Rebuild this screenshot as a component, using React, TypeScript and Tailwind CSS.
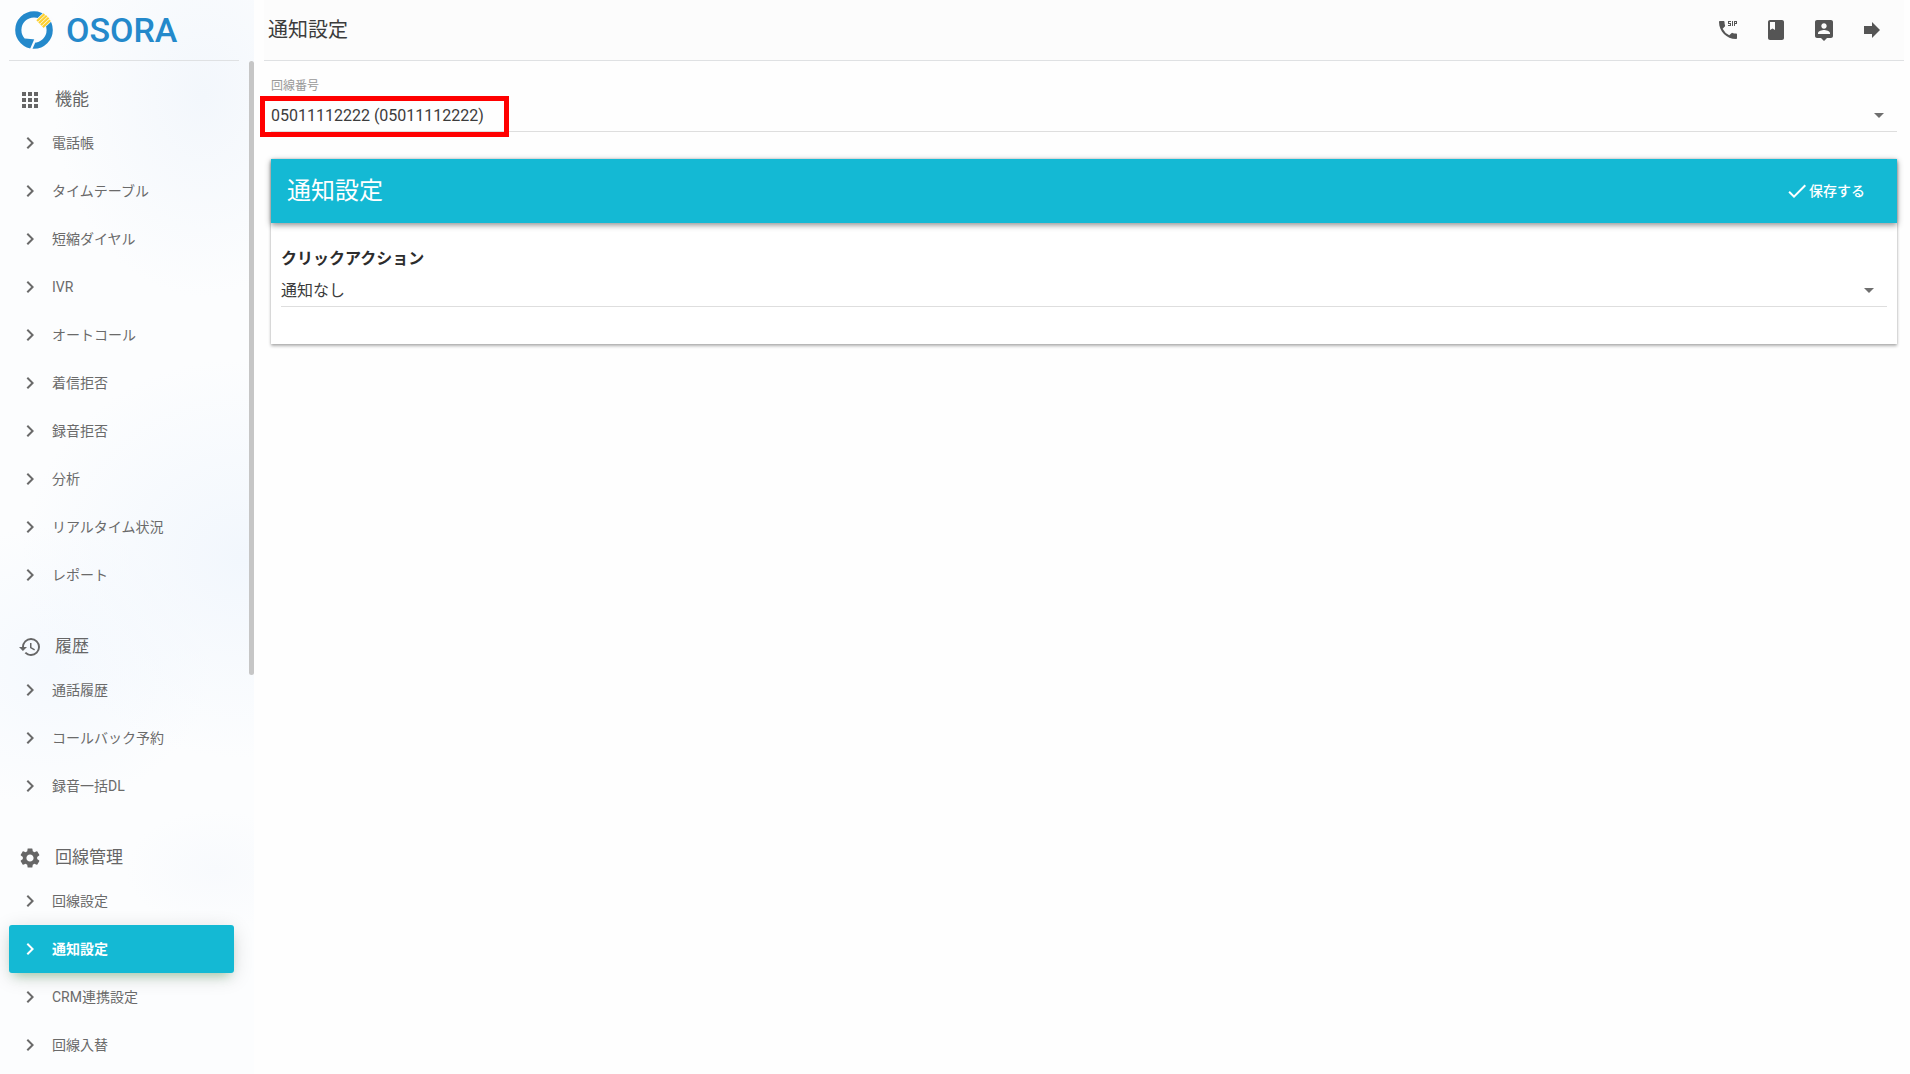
import type { ReactNode } from "react";
import {
  MdApps,
  MdArrowDropDown,
  MdBook,
  MdCheck,
  MdChevronRight,
  MdDialerSip,
  MdForward,
  MdHistory,
  MdSettings,
} from "react-icons/md";

type Section = {
  title: string;
  icon: ReactNode;
  items: string[];
};

const SECTIONS: Section[] = [
  {
    title: "機能",
    icon: <MdApps size={24} />,
    items: ["電話帳", "タイムテーブル", "短縮ダイヤル", "IVR", "オートコール", "着信拒否", "録音拒否", "分析", "リアルタイム状況", "レポート"],
  },
  {
    title: "履歴",
    icon: <MdHistory size={24} />,
    items: ["通話履歴", "コールバック予約", "録音一括DL"],
  },
  {
    title: "回線管理",
    icon: <MdSettings size={24} />,
    items: ["回線設定", "通知設定", "CRM連携設定", "回線入替"],
  },
];

const ACTIVE = "通知設定";

function AccountIcon() {
  return (
    <svg width={24} height={24} viewBox="0 0 24 24" fill="currentColor">
      <path d="M19 2H5c-1.1 0-2 .9-2 2v14c0 1.1.9 2 2 2h4l3 3 3-3h4c1.1 0 2-.9 2-2V4c0-1.1-.9-2-2-2zm-7 3.3c1.49 0 2.7 1.21 2.7 2.7 0 1.49-1.21 2.7-2.7 2.7-1.49 0-2.7-1.21-2.7-2.7 0-1.49 1.21-2.7 2.7-2.7zM18 16H6v-.9c0-2 4-3.1 6-3.1s6 1.1 6 3.1v.9z" />
    </svg>
  );
}

const ACTIONS = [
  { label: "SIP", icon: <MdDialerSip size={24} /> },
  { label: "マニュアル", icon: <MdBook size={24} /> },
  { label: "アカウント", icon: <AccountIcon /> },
  { label: "ログアウト", icon: <MdForward size={24} /> },
];

function Logo() {
  return (
    <a href="#" className="flex items-center gap-3 pl-[5px]" aria-label="OSORA">
      <svg width={40} height={40} viewBox="0 0 40 40" fill="none">
        <circle cx={20} cy={20} r={15.7} stroke="#2489cb" strokeWidth={6.2} />
        <path d="M11 28.5L21.5 29.5L18 36L12 34Z" fill="#2489cb" />
        <path d="M22 28L16.8 40" stroke="#fbfcfe" strokeWidth={2.2} />
        <g transform="translate(29.6 10.6) rotate(-43)">
          <rect x={-6} y={-6} width={14} height={12} fill="#fbfcfe" />
          <path d="M-5 -4.2H5M-5 -1.4H5.6M-5 1.4H5.6M-5 4.2H5" stroke="#fdd02f" strokeWidth={2.2} />
        </g>
      </svg>
      <span className="text-[34px] leading-10 font-medium text-[#2489cb]">OSORA</span>
    </a>
  );
}

function NavItem({ label }: { label: string }) {
  const active = label === ACTIVE;
  return (
    <li>
      <a
        href="#"
        aria-current={active ? "page" : undefined}
        className={
          active
            ? "flex h-12 items-center gap-[10px] rounded-[3px] bg-[#14b9d4] pl-[9px] text-sm font-bold text-white shadow-[0_4px_20px_0_rgba(0,0,0,0.14),0_7px_10px_-5px_rgba(76,175,80,0.4)]"
            : "flex h-12 items-center gap-[10px] pl-[9px] text-sm text-[#6a6a6a]"
        }
      >
        <MdChevronRight size={24} />
        {label}
      </a>
    </li>
  );
}

function Sidebar() {
  return (
    <aside className="relative w-[254px] shrink-0 bg-[#fcfdfe] bg-[radial-gradient(ellipse_150px_200px_at_80%_9%,#f3f7fc,transparent),radial-gradient(ellipse_220px_200px_at_95%_52%,#f2f7fd,transparent),radial-gradient(ellipse_160px_140px_at_20%_62%,#f5f9fe,transparent),radial-gradient(ellipse_90px_60px_at_85%_81%,#f8fafd,transparent)]">
      <div className="mr-[15px] ml-[9px] flex h-[61px] items-center border-b border-[#dfe1e3]">
        <Logo />
      </div>
      <nav className="mr-5 ml-[9px] flex flex-col gap-[29px] pt-5">
        {SECTIONS.map(s => (
          <section key={s.title}>
            <h2 className="flex h-[38px] items-center gap-[13px] pl-[9px] text-[17px] text-[#666666]">
              {s.icon}
              {s.title}
            </h2>
            <ul>
              {s.items.map(item => <NavItem key={item} label={item} />)}
            </ul>
          </section>
        ))}
      </nav>
      {/* scrollbar thumb */}
      <div className="absolute top-[61px] right-0 h-[614px] w-[5px] rounded-full bg-[#c6c6c6]" />
    </aside>
  );
}

function Select({ id, value }: { id: string; value: string }) {
  return (
    <div className="relative border-b border-[#dedede]">
      <select id={id} defaultValue={value} className="block h-8 w-full appearance-none bg-transparent pt-[2px] text-base text-[#3c3c3c]">
        <option>{value}</option>
      </select>
      <MdArrowDropDown size={24} className="pointer-events-none absolute top-1 right-[6px] text-[#6f6f6f]" />
    </div>
  );
}

export default function App() {
  return (
    <div className="flex h-screen overflow-hidden bg-[#fefefe] font-['Roboto','Noto_Sans_CJK_JP',sans-serif]">
      <Sidebar />
      <div className="min-w-0 flex-1">
        <header className="mr-[6px] ml-[10px] flex h-[61px] items-center justify-between border-b border-[#dfe1e3] bg-[#fcfcfc] pr-5 pl-1">
          <h1 className="text-xl text-[#3c3c3c]">{ACTIVE}</h1>
          <div className="flex gap-6 text-[#555555]">
            {ACTIONS.map(a => (
              <button key={a.label} type="button" aria-label={a.label}>{a.icon}</button>
            ))}
          </div>
        </header>

        <main className="pt-4 pr-[13px] pl-[17px]">
          <label htmlFor="line" className="block text-xs leading-[18px] text-[#999999]">回線番号</label>
          <div className="relative pt-1">
            <Select id="line" value="05011112222 (05011112222)" />
            {/* highlight frame around the selected line */}
            <div className="pointer-events-none absolute top-px -left-[11px] h-[41px] w-[249px] border-[5px] border-[#ff0000]" />
          </div>

          <section className="mt-[27px] bg-white pb-[37px] shadow-[0_2px_3px_0_rgba(0,0,0,0.3),0_0_2px_0_rgba(0,0,0,0.12)]">
            <div className="flex h-16 items-center justify-between bg-[#14b9d4] pr-8 pl-4 text-white shadow-[0_2px_6px_0_rgba(0,0,0,0.45)]">
              <h2 className="text-2xl">{ACTIVE}</h2>
              <button type="button" className="flex items-center text-sm font-medium">
                <MdCheck size={24} />
                保存する
              </button>
            </div>
            <div className="px-[10px] pt-6">
              <label htmlFor="action" className="block text-base leading-6 font-bold text-[#2c2c2c]">クリックアクション</label>
              <div className="pt-[3px]">
                <Select id="action" value="通知なし" />
              </div>
            </div>
          </section>
        </main>
      </div>
    </div>
  );
}
